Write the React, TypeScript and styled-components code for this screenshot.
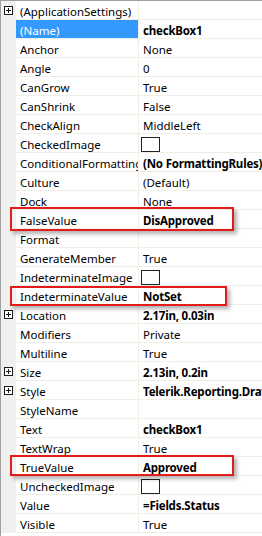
import React from "react";
import styled, { createGlobalStyle } from "styled-components";

const Global = createGlobalStyle`
  html, body { margin: 0; padding: 0; background: #ffffff; }
  body { font-family: "Noto Sans", "Liberation Sans", sans-serif; }
`;

const Grid = styled.div`
  width: 262px;
  height: 536px;
  box-sizing: border-box;
  border-top: 1px solid #a0a0a0;
  border-left: 1px solid #a0a0a0;
  background: #ffffff;
  overflow: hidden;
  font-size: 11.5px;
  color: #000;
`;

const Row = styled.div`
  position: relative;
  display: grid;
  grid-template-columns: 15px 123px 1fr;
  height: 19px;
`;

const Gutter = styled.div`
  background: #f0f0f0;
  display: flex;
  align-items: center;
  justify-content: center;
  padding-right: 1px;
`;

const NameCell = styled.div<{ $selected?: boolean }>`
  box-sizing: border-box;
  padding: 3px 0 0 4px;
  border-right: 1px solid #f0efe6;
  border-bottom: 1px solid #f0efe6;
  background: ${(p) => (p.$selected ? "#3399ff" : "#ffffff")};
  color: ${(p) => (p.$selected ? "#ffffff" : "#000000")};
  white-space: nowrap;
  overflow: hidden;
  line-height: 16px;
`;

const ValueCell = styled.div<{ $bold?: boolean }>`
  box-sizing: border-box;
  padding: 3px 0 0 4px;
  border-bottom: 1px solid #f0efe6;
  font-weight: ${(p) => (p.$bold ? 700 : 400)};
  letter-spacing: ${(p) => (p.$bold ? "-0.2px" : "0")};
  white-space: nowrap;
  overflow: hidden;
  line-height: 16px;
  display: flex;
  align-items: flex-start;
`;

const ImageBox = styled.span`
  display: block;
  width: 19px;
  height: 15px;
  box-sizing: border-box;
  border: 1px solid #222;
  background: #fff;
  margin-left: -2px;
`;

const Highlight = styled.div<{ $top: number; $width: number; $height: number }>`
  position: absolute;
  left: 9px;
  top: ${(p) => p.$top}px;
  width: ${(p) => p.$width}px;
  height: ${(p) => p.$height}px;
  box-sizing: border-box;
  border: 2px solid #e21b1b;
  box-shadow: 3px 3px 4px rgba(0, 0, 0, 0.3);
  pointer-events: none;
  z-index: 2;
`;

const Plus = () => (
  <svg width="9" height="9" viewBox="0 0 9 9">
    <rect x="0.5" y="0.5" width="8" height="8" fill="#fff" stroke="#1a1a1a" />
    <path d="M2 4.5H7M4.5 2V7" stroke="#1a1a1a" strokeWidth="1" />
  </svg>
);

type Prop = {
  name: string;
  value?: string;
  bold?: boolean;
  expand?: boolean;
  image?: boolean;
  selected?: boolean;
  box?: { top: number; width: number; height: number };
};

const props: Prop[] = [
  { name: "(ApplicationSettings)", expand: true },
  { name: "(Name)", value: "checkBox1", bold: true, selected: true },
  { name: "Anchor", value: "None" },
  { name: "Angle", value: "0" },
  { name: "CanGrow", value: "True" },
  { name: "CanShrink", value: "False" },
  { name: "CheckAlign", value: "MiddleLeft" },
  { name: "CheckedImage", image: true },
  { name: "ConditionalFormatting", value: "(No FormattingRules)", bold: true },
  { name: "Culture", value: "(Default)" },
  { name: "Dock", value: "None" },
  { name: "FalseValue", value: "DisApproved", bold: true, box: { top: -3, width: 224, height: 24 } },
  { name: "Format" },
  { name: "GenerateMember", value: "True" },
  { name: "IndeterminateImage", image: true },
  { name: "IndeterminateValue", value: "NotSet", bold: true, box: { top: 0, width: 217, height: 20 } },
  { name: "Location", value: "2.17in, 0.03in", bold: true, expand: true },
  { name: "Modifiers", value: "Private" },
  { name: "Multiline", value: "True" },
  { name: "Size", value: "2.13in, 0.2in", bold: true, expand: true },
  { name: "Style", value: "Telerik.Reporting.Drawing.Style", bold: true, expand: true },
  { name: "StyleName" },
  { name: "Text", value: "checkBox1", bold: true },
  { name: "TextWrap", value: "True" },
  { name: "TrueValue", value: "Approved", bold: true, box: { top: -2, width: 224, height: 21 } },
  { name: "UncheckedImage", image: true },
  { name: "Value", value: "=Fields.Status", bold: true },
  { name: "Visible", value: "True" },
];

export default function App() {
  return (
    <>
      <Global />
      <Grid>
        {props.map((p) => (
          <Row key={p.name}>
            <Gutter>{p.expand ? <Plus /> : null}</Gutter>
            <NameCell $selected={p.selected}>{p.name}</NameCell>
            <ValueCell $bold={p.bold}>
              {p.image ? <ImageBox /> : p.value ?? ""}
            </ValueCell>
            {p.box ? (
              <Highlight $top={p.box.top} $width={p.box.width} $height={p.box.height} />
            ) : null}
          </Row>
        ))}
      </Grid>
    </>
  );
}
